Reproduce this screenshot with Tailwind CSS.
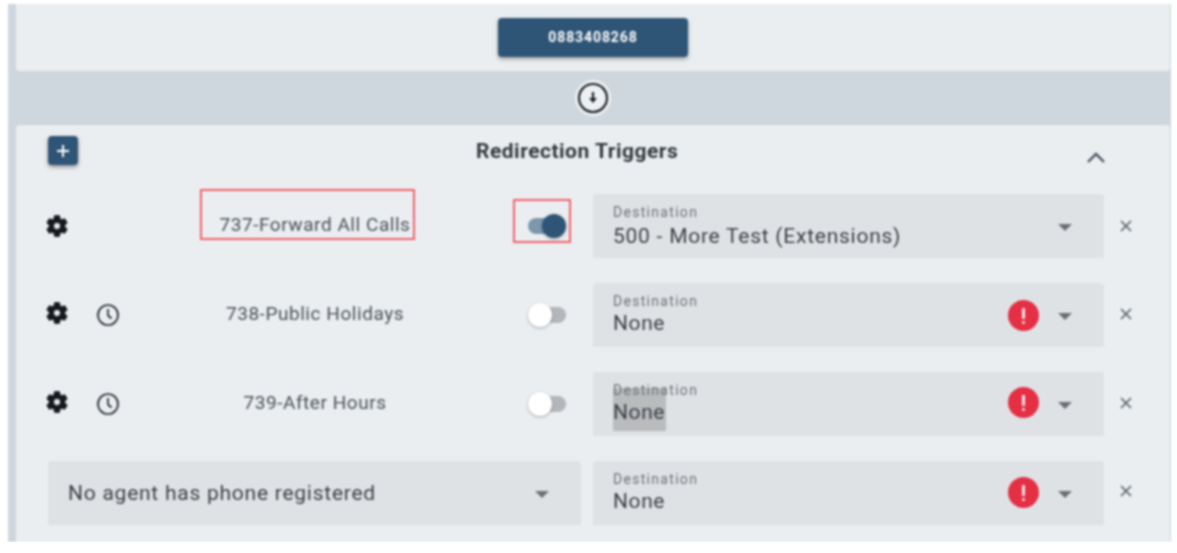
<!DOCTYPE html>
<html>

<head>
    <title>Redirection Triggers</title>
    <script src="https://cdn.jsdelivr.net/npm/@tailwindcss/browser@4"></script>
</head>

<body class="bg-white">
    <div class="ml-[8px] mt-[4px] w-[1163px] h-[538px] pl-[8px] pr-[1px] flex flex-col bg-[#cfd7de] font-['Roboto',sans-serif] text-[#3a3f45] blur-[0.8px]">

        <div class="h-[67px] shrink-0 rounded-b-[4px] bg-[#eaeef1] flex justify-center pt-[14px]">
            <button class="h-[39px] w-[190px] rounded-[4px] bg-[#2f5576] text-white text-[14px] font-bold tracking-[0.9px] shadow-[0_2px_4px_rgba(0,0,0,0.35)]">0883408268</button>
        </div>

        <div class="h-[54px] shrink-0 flex items-center justify-center">
            <div class="w-[36px] h-[36px] rounded-full bg-[#eef1f3] flex items-center justify-center">
                <svg width="32" height="32" viewBox="0 0 32 32" fill="none" stroke="#1c2126">
                    <circle cx="16" cy="16" r="14" stroke-width="2.2" />
                    <path d="M16 10v7" stroke-width="2.2" />
                    <path d="M12 16h8l-4 5z" fill="#1c2126" stroke="none" />
                </svg>
            </div>
        </div>

        <div class="flex-1 rounded-t-[4px] bg-[#eaeef1] pl-[32px]">
            <div class="relative h-[69px]">
                <button class="absolute left-0 top-[11px] w-[30px] h-[29px] rounded-[4px] bg-[#2f5576] flex items-center justify-center shadow-[0_2px_4px_rgba(0,0,0,0.4)]">
                    <svg width="14" height="14" viewBox="0 0 14 14" stroke="white" stroke-width="2"><path d="M7 1v12M1 7h12" /></svg>
                </button>
                <h2 class="absolute left-[428px] top-[14px] text-[21px] leading-[24px] tracking-[0.5px] font-bold text-[#33383e]">Redirection Triggers</h2>
                <svg class="absolute left-[1036px] top-[20px]" width="24" height="24" viewBox="0 0 24 24" fill="none" stroke="#4a5159" stroke-width="2.4"><path d="M4 17l8-8 8 8" /></svg>
            </div>

            <div class="flex flex-col gap-[25px]">
                <div class="flex h-[64px] items-center">
                    <div class="w-[102px] -ml-[4px] mr-[4px] flex items-center gap-[26px]">
                        <svg width="26" height="26" viewBox="0 0 24 24" fill="#14181c" stroke="#14181c" stroke-width="0.8"><path d="M19.14 12.94c.04-.3.06-.61.06-.94 0-.32-.02-.64-.07-.94l2.03-1.58c.18-.14.23-.41.12-.61l-1.92-3.32c-.12-.22-.37-.29-.59-.22l-2.39.96c-.5-.38-1.03-.7-1.62-.94l-.36-2.54c-.04-.24-.24-.41-.48-.41h-3.84c-.24 0-.43.17-.47.41l-.36 2.54c-.59.24-1.13.57-1.62.94l-2.39-.96c-.22-.08-.47 0-.59.22L2.74 8.87c-.12.21-.08.47.12.61l2.03 1.58c-.05.3-.09.63-.09.94s.02.64.07.94l-2.03 1.58c-.18.14-.23.41-.12.61l1.92 3.32c.12.22.37.29.59.22l2.39-.96c.5.38 1.03.7 1.62.94l.36 2.54c.05.24.24.41.48.41h3.84c.24 0 .44-.17.47-.41l.36-2.54c.59-.24 1.13-.56 1.62-.94l2.39.96c.22.08.47 0 .59-.22l1.92-3.32c.12-.22.07-.47-.12-.61l-2.01-1.58zM12 15.2c-1.76 0-3.2-1.44-3.2-3.2s1.44-3.2 3.2-3.2 3.2 1.44 3.2 3.2-1.44 3.2-3.2 3.2z" /></svg>
                    </div>
                    <div class="relative w-[330px] text-center text-[19px] tracking-[0.55px] text-[#4b5057] -mt-[2px]">
                        737-Forward All Calls
                        <div class="absolute left-[50px] -top-[22px] w-[215px] h-[51px] border-2 border-[#f4606a]"></div>
                    </div>
                    <div class="relative w-[101px] pl-[48px]">
                        <div class="relative w-[38px] h-[16px] rounded-full bg-[#7e97ad]">
                            <div class="absolute right-0 -top-[4px] w-[24px] h-[24px] rounded-full bg-[#2f5576] shadow-[0_1px_3px_rgba(0,0,0,0.3)]"></div>
                        </div>
                        <div class="absolute left-[33px] -top-[19px] w-[58px] h-[44px] border-2 border-[#f4606a]"></div>
                    </div>
                    <div class="ml-[12px] relative w-[511px] h-[64px] rounded-t-[4px] bg-[#dfe2e5] pl-[20px] pt-[10px]">
                        <div class="text-[14px] leading-[16px] tracking-[1.3px] text-[#6d7278]">Destination</div>
                        <div class="mt-[1px] text-[21px] leading-[30px] tracking-[0.75px] text-[#3a3f45]">500 - More Test (Extensions)</div>
                        <div class="absolute left-[465px] top-[30px] w-0 h-0 border-x-[7px] border-x-transparent border-t-[7px] border-t-[#6b6f73]"></div>
                    </div>
                    <svg class="ml-[15px]" width="14" height="14" viewBox="0 0 14 14" stroke="#565c63" stroke-width="1.6"><path d="M2 2l10 10M12 2L2 12" /></svg>
                </div>

                <div class="flex h-[64px] items-center">
                    <div class="w-[102px] -ml-[4px] mr-[4px] flex items-center gap-[26px]">
                        <svg class="-mt-[4px]" width="26" height="26" viewBox="0 0 24 24" fill="#14181c" stroke="#14181c" stroke-width="0.8"><path d="M19.14 12.94c.04-.3.06-.61.06-.94 0-.32-.02-.64-.07-.94l2.03-1.58c.18-.14.23-.41.12-.61l-1.92-3.32c-.12-.22-.37-.29-.59-.22l-2.39.96c-.5-.38-1.03-.7-1.62-.94l-.36-2.54c-.04-.24-.24-.41-.48-.41h-3.84c-.24 0-.43.17-.47.41l-.36 2.54c-.59.24-1.13.57-1.62.94l-2.39-.96c-.22-.08-.47 0-.59.22L2.74 8.87c-.12.21-.08.47.12.61l2.03 1.58c-.05.3-.09.63-.09.94s.02.64.07.94l-2.03 1.58c-.18.14-.23.41-.12.61l1.92 3.32c.12.22.37.29.59.22l2.39-.96c.5.38 1.03.7 1.62.94l.36 2.54c.05.24.24.41.48.41h3.84c.24 0 .44-.17.47-.41l.36-2.54c.59-.24 1.13-.56 1.62-.94l2.39.96c.22.08.47 0 .59-.22l1.92-3.32c.12-.22.07-.47-.12-.61l-2.01-1.58zM12 15.2c-1.76 0-3.2-1.44-3.2-3.2s1.44-3.2 3.2-3.2 3.2 1.44 3.2 3.2-1.44 3.2-3.2 3.2z" /></svg>
                        <svg width="24" height="24" viewBox="0 0 24 24" fill="none" stroke="#23282e" stroke-width="1.7"><circle cx="12" cy="12" r="10" /><path d="M12 6v6.5l3.5 3" /></svg>
                    </div>
                    <div class="w-[330px] text-center text-[19px] tracking-[0.55px] text-[#4b5057] -mt-[2px]">738-Public Holidays</div>
                    <div class="w-[101px] pl-[48px]">
                        <div class="relative w-[38px] h-[16px] rounded-full bg-[#b3b7bb]">
                            <div class="absolute left-0 -top-[4px] w-[24px] h-[24px] rounded-full bg-white shadow-[0_1px_3px_rgba(0,0,0,0.3)]"></div>
                        </div>
                    </div>
                    <div class="ml-[12px] relative w-[511px] h-[64px] rounded-t-[4px] bg-[#dfe2e5] pl-[20px] pt-[10px]">
                        <div class="text-[14px] leading-[16px] tracking-[1.3px] text-[#6d7278]">Destination</div>
                        <div class="-mt-[1px] text-[21px] leading-[30px] tracking-[0.6px] text-[#3a3f45]">None</div>
                        <div class="absolute left-[415px] top-[17px] w-[31px] h-[31px] rounded-full bg-[#e42f45] flex flex-col items-center justify-center gap-[2px]"><span class="w-[3px] h-[11px] rounded-[1px] bg-[#f6e6e8]"></span><span class="w-[3px] h-[3px] rounded-full bg-[#f6e6e8]"></span></div>
                        <div class="absolute left-[465px] top-[30px] w-0 h-0 border-x-[7px] border-x-transparent border-t-[7px] border-t-[#6b6f73]"></div>
                    </div>
                    <svg class="ml-[15px] -mt-[2px]" width="14" height="14" viewBox="0 0 14 14" stroke="#565c63" stroke-width="1.6"><path d="M2 2l10 10M12 2L2 12" /></svg>
                </div>

                <div class="flex h-[64px] items-center">
                    <div class="w-[102px] -ml-[4px] mr-[4px] flex items-center gap-[26px]">
                        <svg class="-mt-[4px]" width="26" height="26" viewBox="0 0 24 24" fill="#14181c" stroke="#14181c" stroke-width="0.8"><path d="M19.14 12.94c.04-.3.06-.61.06-.94 0-.32-.02-.64-.07-.94l2.03-1.58c.18-.14.23-.41.12-.61l-1.92-3.32c-.12-.22-.37-.29-.59-.22l-2.39.96c-.5-.38-1.03-.7-1.62-.94l-.36-2.54c-.04-.24-.24-.41-.48-.41h-3.84c-.24 0-.43.17-.47.41l-.36 2.54c-.59.24-1.13.57-1.62.94l-2.39-.96c-.22-.08-.47 0-.59.22L2.74 8.87c-.12.21-.08.47.12.61l2.03 1.58c-.05.3-.09.63-.09.94s.02.64.07.94l-2.03 1.58c-.18.14-.23.41-.12.61l1.92 3.32c.12.22.37.29.59.22l2.39-.96c.5.38 1.03.7 1.62.94l.36 2.54c.05.24.24.41.48.41h3.84c.24 0 .44-.17.47-.41l.36-2.54c.59-.24 1.13-.56 1.62-.94l2.39.96c.22.08.47 0 .59-.22l1.92-3.32c.12-.22.07-.47-.12-.61l-2.01-1.58zM12 15.2c-1.76 0-3.2-1.44-3.2-3.2s1.44-3.2 3.2-3.2 3.2 1.44 3.2 3.2-1.44 3.2-3.2 3.2z" /></svg>
                        <svg width="24" height="24" viewBox="0 0 24 24" fill="none" stroke="#23282e" stroke-width="1.7"><circle cx="12" cy="12" r="10" /><path d="M12 6v6.5l3.5 3" /></svg>
                    </div>
                    <div class="w-[330px] text-center text-[19px] tracking-[0.55px] text-[#4b5057] -mt-[2px]">739-After Hours</div>
                    <div class="w-[101px] pl-[48px]">
                        <div class="relative w-[38px] h-[16px] rounded-full bg-[#b3b7bb]">
                            <div class="absolute left-0 -top-[4px] w-[24px] h-[24px] rounded-full bg-white shadow-[0_1px_3px_rgba(0,0,0,0.3)]"></div>
                        </div>
                    </div>
                    <div class="ml-[12px] relative w-[511px] h-[64px] rounded-t-[4px] bg-[#dfe2e5] pl-[20px] pt-[10px]">
                        <div class="absolute left-[20px] top-[16px] w-[53px] h-[43px] bg-[#b9bbbd]"></div>
                        <div class="relative text-[14px] leading-[16px] tracking-[1.3px] text-[#6d7278]">Destination</div>
                        <div class="relative -mt-[1px] text-[21px] leading-[30px] tracking-[0.6px] text-[#3a3f45]">None</div>
                        <div class="absolute left-[415px] top-[15px] w-[31px] h-[31px] rounded-full bg-[#e42f45] flex flex-col items-center justify-center gap-[2px]"><span class="w-[3px] h-[11px] rounded-[1px] bg-[#f6e6e8]"></span><span class="w-[3px] h-[3px] rounded-full bg-[#f6e6e8]"></span></div>
                        <div class="absolute left-[465px] top-[30px] w-0 h-0 border-x-[7px] border-x-transparent border-t-[7px] border-t-[#6b6f73]"></div>
                    </div>
                    <svg class="ml-[15px] -mt-[2px]" width="14" height="14" viewBox="0 0 14 14" stroke="#565c63" stroke-width="1.6"><path d="M2 2l10 10M12 2L2 12" /></svg>
                </div>

                <div class="flex h-[64px] items-center">
                    <div class="relative w-[533px] h-[64px] rounded-t-[4px] bg-[#dfe2e5] pl-[20px] pt-[2px] flex items-center text-[21px] tracking-[0.75px] text-[#3a3f45]">
                        No agent has phone registered
                        <div class="absolute left-[487px] top-[30px] w-0 h-0 border-x-[7px] border-x-transparent border-t-[7px] border-t-[#6b6f73]"></div>
                    </div>
                    <div class="ml-[12px] relative w-[511px] h-[64px] rounded-t-[4px] bg-[#dfe2e5] pl-[20px] pt-[10px]">
                        <div class="text-[14px] leading-[16px] tracking-[1.3px] text-[#6d7278]">Destination</div>
                        <div class="-mt-[1px] text-[21px] leading-[30px] tracking-[0.6px] text-[#3a3f45]">None</div>
                        <div class="absolute left-[415px] top-[16px] w-[31px] h-[31px] rounded-full bg-[#e42f45] flex flex-col items-center justify-center gap-[2px]"><span class="w-[3px] h-[11px] rounded-[1px] bg-[#f6e6e8]"></span><span class="w-[3px] h-[3px] rounded-full bg-[#f6e6e8]"></span></div>
                        <div class="absolute left-[465px] top-[30px] w-0 h-0 border-x-[7px] border-x-transparent border-t-[7px] border-t-[#6b6f73]"></div>
                    </div>
                    <svg class="ml-[15px] -mt-[5px]" width="14" height="14" viewBox="0 0 14 14" stroke="#565c63" stroke-width="1.6"><path d="M2 2l10 10M12 2L2 12" /></svg>
                </div>
            </div>
        </div>
    </div>
</body>

</html>
